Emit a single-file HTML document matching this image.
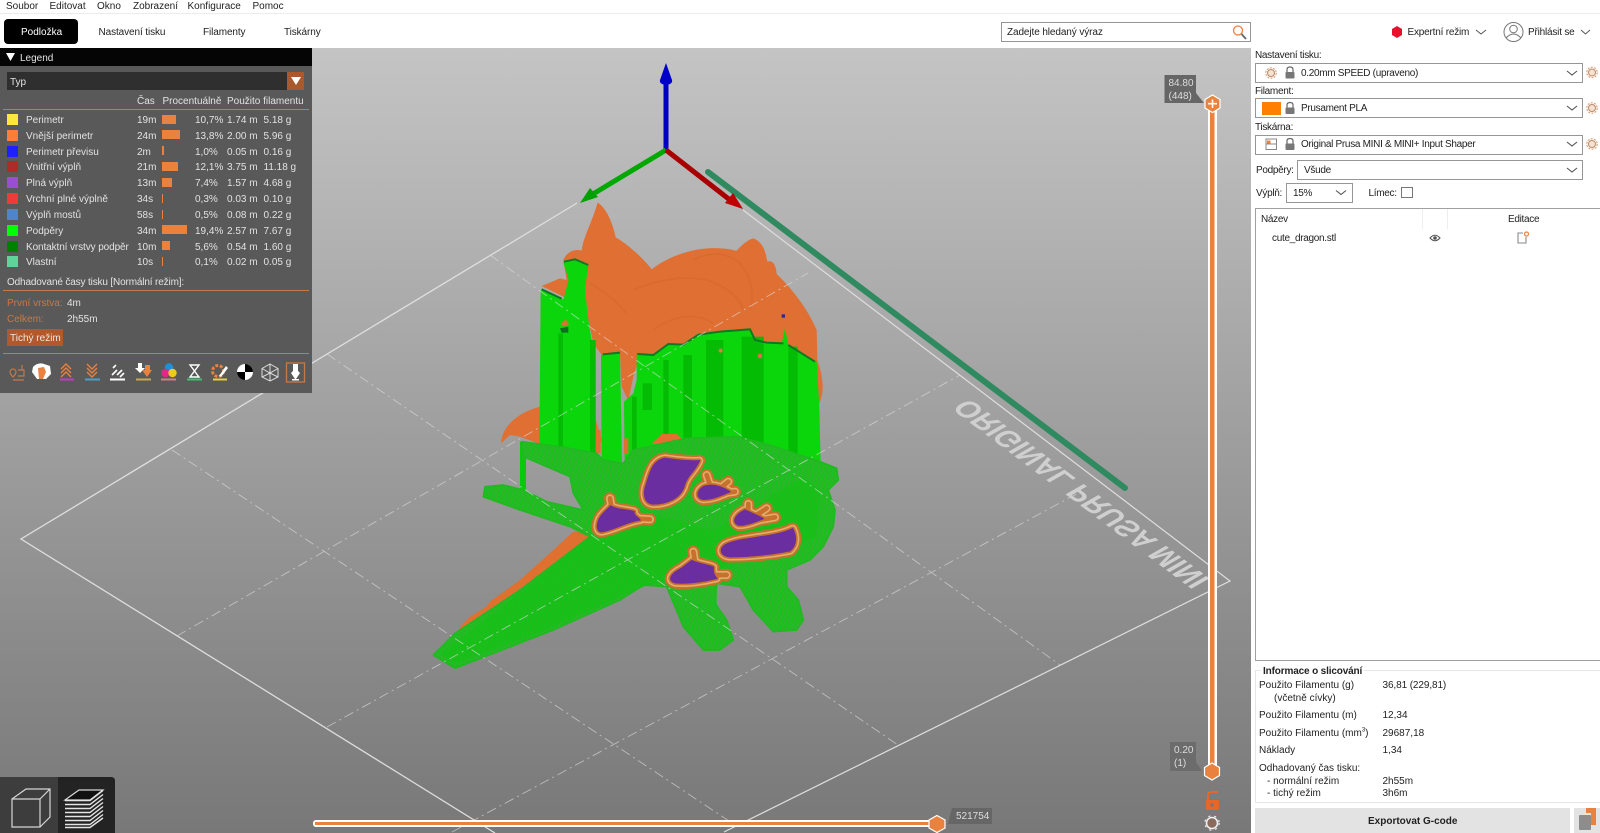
<!DOCTYPE html>
<html><head><meta charset="utf-8"><title>PrusaSlicer</title>
<style>
html,body{margin:0;padding:0;background:#fff;overflow:hidden}
body{width:1600px;height:833px;position:relative;font-family:"Liberation Sans",sans-serif;font-size:10px;color:#222}
.t{position:absolute;white-space:nowrap;line-height:12px;margin-top:1.5px}
.c{letter-spacing:-.3px}
.b{position:absolute;box-sizing:border-box;border:1px solid #969696;background:#fff}
.l{color:#e2e2e2}
.o{color:#c47a49}
.sw{position:absolute;left:7px;width:11px;height:11px}
.bar{position:absolute;left:162px;height:9px;background:#e9813f}
svg{position:absolute;left:0;top:0}
</style></head><body>

<!-- 3D canvas -->
<div style="position:absolute;left:0;top:48px;width:1251px;height:785px;background:linear-gradient(#c4c4c4,#787878)"></div>
<svg width="1251" height="833" viewBox="0 0 1251 833">
<defs>
<pattern id="h" width="5" height="5" patternUnits="userSpaceOnUse" patternTransform="rotate(-20)"><rect width="5" height="5" fill="#10c010"/><rect width="5" height="1.7" fill="#4ab04a"/></pattern>
<g id="p">
<path d="M735 85C770 90 810 95 838 92C825 125 800 135 792 170C780 205 740 222 700 222C672 220 668 190 680 160C690 125 700 90 735 85Z"/>
<path d="M572 228C590 240 620 238 642 245C640 258 655 262 660 270C620 275 580 300 545 305C525 305 530 270 550 250Z"/>
<path d="M850 170C875 160 905 170 930 185C905 195 880 208 850 208C830 205 828 185 850 170Z"/>
<path d="M975 240C995 250 1020 260 1030 266C1005 275 975 288 955 285C935 275 945 255 975 240Z"/>
<path d="M915 345C960 320 1060 325 1118 296C1130 320 1130 345 1110 362C1060 372 990 380 930 380C905 378 895 360 915 345Z"/>
<path d="M815 392C845 405 870 405 880 412C878 425 880 435 890 445C850 455 800 462 765 458C740 450 755 430 785 415Z"/>
</g>
<g id="blobs">
<use href="#p"/>
<path d="M860 135L870 165M925 155L900 175M945 185L910 190M985 222L985 250M1040 235L1010 255M1065 262L1020 270M570 205L575 235M690 268L640 265M820 365L825 395M920 435L875 435" fill="none"/>
</g>
</defs>
<!-- bed outline -->
<g fill="none" stroke="#dedede">
<path d="M577 203L21 539L495 833" stroke-width="1.3"/>
<path d="M743 210L1230 581L724 832" stroke-width="1.2"/>
</g>
<!-- bar -->
<path d="M708 172L1125 488" stroke="#2f8a60" stroke-width="6" stroke-linecap="round"/>
<!-- axes -->
<path d="M666 150V84" stroke="#0000c0" stroke-width="5"/>
<path d="M666 63L672 80Q673 84 666 85Q659 84 660 80Z" fill="#0000c8"/>
<path d="M666 150L593 194" stroke="#00a800" stroke-width="5"/>
<path d="M580 203L590 188L598 197Z" fill="#00a000"/>
<path d="M666 150L730 200" stroke="#a80000" stroke-width="5"/>
<path d="M743 209L725 203L733 193Z" fill="#c00000"/>

<!-- upper model -->
<g transform="translate(420,180) scale(.33333)">
<path fill="#df6f32" d="M243 790C245 745 285 700 360 680L400 800L380 800L300 770L270 765Z"/>
<path fill="#df6f32" d="M522 700L545 780L530 820Z"/>
<path fill="#df6f32" d="M533 68C560 85 578 130 587 172C620 190 670 235 695 268C750 225 830 200 900 205C925 205 945 212 950 212C965 195 985 178 1000 175C1025 185 1035 205 1042 245C1055 240 1068 250 1070 282C1110 320 1160 380 1190 450L1192 540C1210 590 1215 640 1195 675L1150 600L900 540L660 525L640 590L625 662L605 620L600 520L545 525L520 490L505 420L495 330L440 355L365 318L420 295L440 300L430 240C440 215 465 205 485 212C490 170 515 130 533 68Z"/>
<path fill="none" stroke="#c85f28" stroke-width="5" opacity=".25" d="M820 240Q900 200 960 250Q1010 310 990 390M640 330Q760 280 860 300Q950 330 970 390M510 310Q580 350 620 400M700 450Q800 380 880 430"/>
<!-- pillars -->
<path fill="#0bd60b" d="M362 330L430 358L446 300L430 248L465 240L505 252L495 330L505 420L515 480L527 540L527 820L358 820Z"/>
<path fill="#0bd60b" d="M543 525L600 518L606 850L545 850Z"/>
<path fill="#0bd60b" d="M650 518L700 525L745 495L790 495L835 462L990 448L1005 480L1040 490L1085 490L1095 445L1105 495L1150 525L1190 545L1198 680L1202 850L614 850L612 665L640 640L650 600Z"/>
<g fill="#04bc04">
<rect x="415" y="460" width="14" height="360"/><rect x="510" y="480" width="17" height="340"/>
<rect x="668" y="610" width="28" height="80"/><rect x="730" y="540" width="16" height="300"/>
<rect x="790" y="525" width="26" height="320"/><rect x="858" y="480" width="52" height="360"/>
<rect x="965" y="470" width="66" height="370"/><rect x="1105" y="500" width="28" height="340"/>
<rect x="636" y="650" width="14" height="190"/>
</g>
<path fill="none" stroke="#0c7a22" stroke-width="6" d="M365 328L425 356M432 245L465 238L505 255M548 523L600 518M652 522L700 525L745 492L790 494L835 464L900 455L990 448L1005 480L1040 488L1090 490M1105 495L1185 545"/>
<path fill="#df6f32" d="M422 432L437 418L447 432L432 440Z"/>
<path fill="#0c6e20" d="M420 445L445 440V458L425 458Z"/>
<circle cx="1020" cy="528" r="7" fill="#e06a4a"/><circle cx="902" cy="512" r="6" fill="#d8804a"/>
<path fill="#2a2a90" d="M1085 403h10v10h-10z"/>
</g>

<!-- lower model -->
<g transform="translate(420,430) scale(.33333)">
<path fill="#0bc80b" d="M300 35H318V180H300Z"/>
<path fill="#0bd60b" d="M850 440H890V530H850ZM960 390L1100 390V480L1020 480Z"/>
<path fill="#e06f30" d="M695 40L725 12L770 12L790 30L740 50Z"/>
<path fill="#e06f30" d="M612 25L625 25V72L612 72ZM528 0H542V70H528Z"/>
<path fill="#e0702f" d="M510 305L460 305L400 360L300 450L210 515L200 530L150 560L130 580L105 612L205 555L300 475L515 350Z"/>
<path fill="url(#h)" stroke="#22b822" stroke-width="5" stroke-linejoin="round" d="M305 35L420 50L530 70L550 90L610 100L640 60L800 25L950 20L1050 45L1200 95L1250 115L1255 150L1225 180L1245 240L1240 290L1210 350L1170 390L1100 420L1100 470L1135 510L1150 570L1130 600L1060 605L1000 540L960 470L890 460L885 520L920 570L940 630L900 660L850 660L790 590L740 470L670 465L600 510L400 600L105 715L40 675L105 610L300 480L510 320L450 290L300 240L190 200L195 170L250 165L310 180L380 215L490 240L460 190L450 140L310 80Z"/>
<path fill="#0dc60d" opacity=".4" d="M510 320L640 240L880 300L1150 140L1200 180L1190 320L1000 390L700 460L600 500L400 590L110 700L60 672L300 490Z"/>
<g stroke-linejoin="round" stroke-linecap="round" fill="#c8702c">
<use href="#blobs" stroke="#c8702c" stroke-width="36"/>
<use href="#blobs" stroke="#dfae68" stroke-width="24"/>
<use href="#blobs" stroke="#c8702c" stroke-width="14"/>
</g>
<use href="#p" fill="#6a2ea0" stroke="#6a2ea0" stroke-width="4" stroke-linejoin="round"/>
</g>

<!-- dashed grid -->
<g fill="none" stroke="#dcdcdc" stroke-width=".9" stroke-dasharray="10 4 2 4" opacity=".65">
<path d="M172 450L738 827"/><path d="M327 354L898 745"/><path d="M490 255L1060 665"/>
<path d="M177 636L808 273"/><path d="M327 727L960 375"/><path d="M452 832L1080 492"/>
</g>
<!-- bed label (flipped, seen from below) -->
<text transform="matrix(.80 .60 .96 -.55 969 398)" font-family="Liberation Sans" font-weight="bold" font-size="27.5" fill="#cfcfcf">ORIGINAL PRUSA MINI</text>

<!-- bottom-left view switch -->
<path d="M0 777H58V833H0Z" fill="#3d3d3d"/>
<path d="M58 777H111Q115 777 115 781V833H58Z" fill="#232323"/>
<g fill="none" stroke="#d6d6d6" stroke-width="1.2">
<path d="M12 799H40V827H12ZM12 799L26 789H50V817L40 827M40 799L50 789"/>
<path d="M65 800L79 790H103L90 800Z" fill="#111"/>
</g>
<g fill="none" stroke="#e4e4e4" stroke-width="1.4">
<path d="M65 800.5H90L103 790.5M65 804.5H90L103 794.5M65 808.5H90L103 798.5M65 812.5H90L103 802.5M65 816.5H90L103 806.5M65 820.5H90L103 810.5M65 824.5H90L103 814.5M65 827.5H90L103 818"/>
</g>

<!-- horizontal slider -->
<rect x="313" y="820" width="624" height="7" rx="3" fill="#fff"/>
<rect x="315" y="822" width="622" height="3" fill="#e9813f"/>
<path d="M937 815.5L945 820V828L937 832.5L929 828V820Z" fill="#e9813f" stroke="#fff" stroke-width="1.2"/>
<path d="M952 808H992V824H952L948 824Z" fill="#666"/>
<!-- vertical slider -->
<rect x="1208" y="110" width="9" height="660" fill="#fff"/>
<rect x="1210" y="110" width="4.5" height="660" fill="#e9813f"/>
<path d="M1212.5 95L1220 99.5V108L1212.5 112.5L1205 108V99.5Z" fill="#e9813f" stroke="#fff" stroke-width="1.2"/>
<path d="M1208 103.7H1217M1212.5 99.5V108" stroke="#fff" stroke-width="1.6"/>
<path d="M1212 763L1219.5 767.5V775.5L1212 780L1204.5 775.5V767.5Z" fill="#e9813f" stroke="#fff" stroke-width="1.2"/>
<path d="M1164.5 75H1196V93L1204 103H1164.5Z" fill="#666"/>
<path d="M1170 742H1196V762L1202 771H1170Z" fill="#6c6c6c"/>
<rect x="1206" y="800" width="13" height="10" rx="1" fill="#e8662a"/>
<path d="M1208 800V795Q1208 792 1212 792H1218" fill="none" stroke="#e8662a" stroke-width="2"/>
<circle cx="1212" cy="805" r="1.7" fill="#777"/>
<circle cx="1212" cy="823" r="5.5" fill="#8a6a5c" stroke="#eee" stroke-width="1.6"/>
<circle cx="1212" cy="823" r="7.2" fill="none" stroke="#eee" stroke-width="1.2" stroke-dasharray="2 4"/>
</svg>
<div class="t" style="left:1168.5px;top:76.5px;color:#ddd">84.80</div>
<div class="t" style="left:1168.5px;top:89px;color:#ddd">(448)</div>
<div class="t" style="left:1174px;top:743.5px;color:#ddd">0.20</div>
<div class="t" style="left:1174px;top:756px;color:#ddd">(1)</div>
<div class="t" style="left:956px;top:809px;color:#ddd;font-size:10px">521754</div>

<!-- top bar -->
<div style="position:absolute;left:0;top:0;width:1600px;height:48px;background:#fff"></div>
<div style="position:absolute;left:0;top:13px;width:1600px;height:1px;background:#ececec"></div>
<div class="t" style="left:6px;top:-1px">Soubor</div>
<div class="t" style="left:49.5px;top:-1px">Editovat</div>
<div class="t" style="left:97px;top:-1px">Okno</div>
<div class="t" style="left:133px;top:-1px">Zobrazení</div>
<div class="t" style="left:187.5px;top:-1px">Konfigurace</div>
<div class="t" style="left:252.5px;top:-1px">Pomoc</div>
<div style="position:absolute;left:4px;top:19px;width:73.5px;height:25px;background:#000;border-radius:4px"></div>
<div class="t" style="left:21px;top:25.5px;color:#fff">Podložka</div>
<div class="t" style="left:98.5px;top:25.5px;letter-spacing:-.1px">Nastavení tisku</div>
<div class="t" style="left:203px;top:25.5px;letter-spacing:-.1px">Filamenty</div>
<div class="t" style="left:284px;top:25.5px;letter-spacing:-.1px">Tiskárny</div>
<div class="b" style="left:1001px;top:22px;width:250px;height:20px"></div>
<div class="t" style="left:1007px;top:25.5px;letter-spacing:-.1px">Zadejte hledaný výraz</div>

<!-- legend panel -->
<div style="position:absolute;left:0;top:48px;width:312px;height:345px;background:#595959"></div>
<div style="position:absolute;left:0;top:48px;width:312px;height:18px;background:#050505"></div>
<div class="t l" style="left:20px;top:51.5px">Legend</div>
<div style="position:absolute;left:7px;top:72px;width:280px;height:18px;background:#2f2f2f"></div>
<div style="position:absolute;left:287px;top:72px;width:17px;height:18px;background:#a95a2c"></div>
<div class="t l" style="left:10px;top:75px">Typ</div>
<div class="t l" style="left:137px;top:94px">Čas</div>
<div class="t l" style="left:162.5px;top:94px">Procentuálně</div>
<div class="t l" style="left:227px;top:94px">Použito filamentu</div>
<div style="position:absolute;left:3px;top:109px;width:306px;height:1px;background:#c47a49"></div>

<div class="sw" style="top:114px;background:#ffe63c"></div><div class="t l" style="left:26px;top:113px">Perimetr</div><div class="t l" style="left:137px;top:113px">19m</div><div class="bar" style="top:114.5px;width:14px"></div><div class="t l" style="left:195px;top:113px">10,7%</div><div class="t l" style="left:227px;top:113px">1.74 m</div><div class="t l" style="left:263.5px;top:113px">5.18 g</div>
<div class="sw" style="top:130px;background:#ff7d38"></div><div class="t l" style="left:26px;top:129px">Vnější perimetr</div><div class="t l" style="left:137px;top:129px">24m</div><div class="bar" style="top:130px;width:18px"></div><div class="t l" style="left:195px;top:129px">13,8%</div><div class="t l" style="left:227px;top:129px">2.00 m</div><div class="t l" style="left:263.5px;top:129px">5.96 g</div>
<div class="sw" style="top:146px;background:#1f1fff"></div><div class="t l" style="left:26px;top:145px">Perimetr převisu</div><div class="t l" style="left:137px;top:145px">2m</div><div class="bar" style="top:146px;width:1.5px"></div><div class="t l" style="left:195px;top:145px">1,0%</div><div class="t l" style="left:227px;top:145px">0.05 m</div><div class="t l" style="left:263.5px;top:145px">0.16 g</div>
<div class="sw" style="top:161px;background:#b02a2a"></div><div class="t l" style="left:26px;top:160.7px">Vnitřní výplň</div><div class="t l" style="left:137px;top:160.7px">21m</div><div class="bar" style="top:162px;width:16px"></div><div class="t l" style="left:195px;top:160.7px">12,1%</div><div class="t l" style="left:227px;top:160.7px">3.75 m</div><div class="t l" style="left:263.5px;top:160.7px">11.18 g</div>
<div class="sw" style="top:177px;background:#9a4fd0"></div><div class="t l" style="left:26px;top:176.7px">Plná výplň</div><div class="t l" style="left:137px;top:176.7px">13m</div><div class="bar" style="top:178px;width:10px"></div><div class="t l" style="left:195px;top:176.7px">7,4%</div><div class="t l" style="left:227px;top:176.7px">1.57 m</div><div class="t l" style="left:263.5px;top:176.7px">4.68 g</div>
<div class="sw" style="top:193px;background:#f03a3a"></div><div class="t l" style="left:26px;top:192.5px">Vrchní plné výplně</div><div class="t l" style="left:137px;top:192.5px">34s</div><div class="bar" style="top:194px;width:1px"></div><div class="t l" style="left:195px;top:192.5px">0,3%</div><div class="t l" style="left:227px;top:192.5px">0.03 m</div><div class="t l" style="left:263.5px;top:192.5px">0.10 g</div>
<div class="sw" style="top:209px;background:#4f85c8"></div><div class="t l" style="left:26px;top:208.3px">Výplň mostů</div><div class="t l" style="left:137px;top:208.3px">58s</div><div class="bar" style="top:210px;width:1px"></div><div class="t l" style="left:195px;top:208.3px">0,5%</div><div class="t l" style="left:227px;top:208.3px">0.08 m</div><div class="t l" style="left:263.5px;top:208.3px">0.22 g</div>
<div class="sw" style="top:225px;background:#00ff00"></div><div class="t l" style="left:26px;top:224px">Podpěry</div><div class="t l" style="left:137px;top:224px">34m</div><div class="bar" style="top:225px;width:25px"></div><div class="t l" style="left:195px;top:224px">19,4%</div><div class="t l" style="left:227px;top:224px">2.57 m</div><div class="t l" style="left:263.5px;top:224px">7.67 g</div>
<div class="sw" style="top:241px;background:#008000"></div><div class="t l" style="left:26px;top:240px;letter-spacing:-.1px">Kontaktní vrstvy podpěr</div><div class="t l" style="left:137px;top:240px">10m</div><div class="bar" style="top:241px;width:7.5px"></div><div class="t l" style="left:195px;top:240px">5,6%</div><div class="t l" style="left:227px;top:240px">0.54 m</div><div class="t l" style="left:263.5px;top:240px">1.60 g</div>
<div class="sw" style="top:256px;background:#5ed39a"></div><div class="t l" style="left:26px;top:255.7px">Vlastní</div><div class="t l" style="left:137px;top:255.7px">10s</div><div class="bar" style="top:257px;width:1px"></div><div class="t l" style="left:195px;top:255.7px">0,1%</div><div class="t l" style="left:227px;top:255.7px">0.02 m</div><div class="t l" style="left:263.5px;top:255.7px">0.05 g</div>

<div class="t l" style="left:7px;top:275px;letter-spacing:-.15px">Odhadované časy tisku [Normální režim]:</div>
<div style="position:absolute;left:3px;top:290px;width:306px;height:1px;background:#c47a49"></div>
<div class="t o" style="left:7px;top:296px">První vrstva:</div><div class="t l" style="left:67px;top:296px">4m</div>
<div class="t o" style="left:7px;top:312px">Celkem:</div><div class="t l" style="left:67px;top:312px">2h55m</div>
<div style="position:absolute;left:7px;top:329px;width:56px;height:17px;background:#b0592c"></div>
<div class="t" style="left:10px;top:331px;color:#f0e6e0">Tichý režim</div>
<div style="position:absolute;left:3px;top:352.5px;width:306px;height:1.5px;background:#c47a49"></div>

<svg width="312" height="393" viewBox="0 0 312 393" style="left:0;top:0">
<path d="M6 53H15L10.5 61Z" fill="#fff"/>
<path d="M291 77H301L296 85Z" fill="#fff"/>
<!-- icon row -->
<g fill="none" stroke="#c47a49" stroke-width="1.2">
<path d="M10 372a3 3 0 1 1 6 0q0 2-3 5q-3-3-3-5ZM13 380H24M18 370H24V376H18M22 365V370"/>
</g>
<path d="M33 367Q38 362 44 364L50 366L51 374L46 379H37L32 372Z" fill="#fff"/>
<path d="M38 368L44 367L46 372L43 379H39Z" fill="#e9813f"/>
<g fill="none" stroke="#e9813f" stroke-width="1.4">
<path d="M61 369L66 364L71 369M61 373L66 368L71 373M61 377L66 372L71 377"/>
<path d="M87 364L92 369L97 364M87 368L92 373L97 368M87 372L92 377L97 372"/>
</g>
<rect x="60" y="378.5" width="14" height="2" fill="#c13ac4"/>
<rect x="85" y="378.5" width="15" height="2" fill="#4aa0c8"/>
<g fill="none" stroke="#fff" stroke-width="1.6"><path d="M112 375L117 370M117 375L122 370M113 368L116 365M120 377L124 373" /></g>
<rect x="110" y="378.5" width="15" height="2" fill="#fff"/>
<path d="M138 363H142V368H145L140 373L135 368H138Z" fill="#fff"/>
<path d="M145 365H150V370H152L147 377L142 370H145Z" fill="#e9813f"/>
<rect x="136" y="378.5" width="15" height="2" fill="#c8a850"/>
<circle cx="169" cy="367.5" r="4.2" fill="#1e90d8"/><circle cx="165.5" cy="373" r="4.2" fill="#e0288a"/><circle cx="172.5" cy="373" r="4.2" fill="#f0c820"/>
<rect x="161" y="378.5" width="15" height="2" fill="#d08080"/>
<path d="M190 365H199L194.5 371L199 377H190L194.5 371Z" fill="none" stroke="#fff" stroke-width="1.4"/>
<rect x="187" y="378.5" width="15" height="2" fill="#40c070"/>
<circle cx="218" cy="371" r="5.5" fill="none" stroke="#e9813f" stroke-width="3" stroke-dasharray="3 1.6"/>
<path d="M219 376L226 366L228 368L221 377Z" fill="#fff"/>
<rect x="213" y="378.5" width="14" height="2" fill="#e8d040"/>
<circle cx="245" cy="372" r="8" fill="#fff"/><path d="M245 364A8 8 0 0 1 253 372H245ZM245 372V380A8 8 0 0 1 237 372Z" fill="#000"/>
<g fill="none" stroke="#ddd" stroke-width="1"><path d="M270 364L278 368.5V377L270 381L262 377V368.5ZM262 368.5L270 373L278 368.5M270 373V381M270 364V373M262 377L270 373L278 377"/></g>
<rect x="286.5" y="363" width="18" height="19" fill="none" stroke="#c47a49" stroke-width="1.3"/>
<path d="M293 364H298V371L300 373L296 379H295L291 373L293 371Z" fill="#fff"/><rect x="292" y="379" width="7" height="1.5" fill="#fff"/>
</svg>

<!-- right panel -->
<div style="position:absolute;left:1251px;top:48px;width:349px;height:785px;background:#fff"></div>
<div class="t c" style="left:1255px;top:48.5px">Nastavení tisku:</div>
<div class="b" style="left:1255px;top:63px;width:328px;height:20px"></div>
<div class="t c" style="left:1301px;top:66px">0.20mm SPEED (upraveno)</div>
<div class="t c" style="left:1255px;top:84px">Filament:</div>
<div class="b" style="left:1255px;top:98px;width:328px;height:20px"></div>
<div style="position:absolute;left:1262px;top:102px;width:19px;height:12.5px;background:#ff8000"></div>
<div class="t c" style="left:1301px;top:101.5px">Prusament PLA</div>
<div class="t c" style="left:1255px;top:120.5px">Tiskárna:</div>
<div class="b" style="left:1255px;top:134.5px;width:328px;height:20px"></div>
<div class="t c" style="left:1301px;top:137.5px">Original Prusa MINI &amp; MINI+ Input Shaper</div>
<div class="t c" style="left:1256px;top:163.5px">Podpěry:</div>
<div class="b" style="left:1297px;top:160px;width:286px;height:20px"></div>
<div class="t c" style="left:1304px;top:163.5px">Všude</div>
<div class="t c" style="left:1256px;top:186px">Výplň:</div>
<div class="b" style="left:1285.5px;top:182.5px;width:67px;height:20px"></div>
<div class="t c" style="left:1293px;top:186px">15%</div>
<div class="t c" style="left:1368.5px;top:186px">Límec:</div>
<div class="b" style="left:1401px;top:187px;width:12px;height:11px;border-color:#777"></div>
<div class="b" style="left:1255px;top:208px;width:345px;height:452.5px;border-color:#a0a0a0;border-right:0;border-width:1px"></div>
<div style="position:absolute;left:1422px;top:209px;width:1px;height:20px;background:#eee"></div>
<div style="position:absolute;left:1447px;top:209px;width:1px;height:20px;background:#eee"></div>
<div class="t c" style="left:1261px;top:212px">Název</div>
<div class="t c" style="left:1508px;top:212px">Editace</div>
<div class="t c" style="left:1272px;top:231.5px">cute_dragon.stl</div>

<div class="t" style="left:1407.5px;top:25.5px;letter-spacing:-.2px">Expertní režim</div>
<div class="t" style="left:1528px;top:25.5px;letter-spacing:-.2px">Přihlásit se</div>

<div style="position:absolute;left:1255px;top:670px;width:345px;height:133px;box-sizing:border-box;border:1px solid #e6e6e6;border-right:0"></div>
<div class="t" style="left:1261px;top:664px;font-weight:bold;background:#fff;padding:0 2px;letter-spacing:-.15px">Informace o slicování</div>
<div class="t" style="left:1259px;top:678.5px">Použito Filamentu (g)</div><div class="t" style="left:1382.5px;top:678.5px;letter-spacing:-.1px">36,81 (229,81)</div>
<div class="t" style="left:1274px;top:691.5px">(včetně cívky)</div>
<div class="t" style="left:1259px;top:708.5px">Použito Filamentu (m)</div><div class="t" style="left:1382.5px;top:708.5px">12,34</div>
<div class="t" style="left:1259px;top:726.5px">Použito Filamentu (mm<sup style="font-size:6px;line-height:0">3</sup>)</div><div class="t" style="left:1382.5px;top:726.5px">29687,18</div>
<div class="t" style="left:1259px;top:743.5px">Náklady</div><div class="t" style="left:1382.5px;top:743.5px">1,34</div>
<div class="t" style="left:1259px;top:761.5px">Odhadovaný čas tisku:</div>
<div class="t" style="left:1267px;top:774px">- normální režim</div><div class="t" style="left:1382.5px;top:774px">2h55m</div>
<div class="t" style="left:1267px;top:786.5px">- tichý režim</div><div class="t" style="left:1382.5px;top:786.5px">3h6m</div>
<div style="position:absolute;left:1255px;top:808px;width:315px;height:25px;background:#e3e3e3"></div>
<div class="t" style="left:1368px;top:814px;font-weight:bold">Exportovat G-code</div>
<div style="position:absolute;left:1574px;top:808px;width:26px;height:25px;background:#e3e3e3"></div>

<svg width="1600" height="833" viewBox="0 0 1600 833">
<!-- search icon -->
<circle cx="1238" cy="30.5" r="4.5" fill="none" stroke="#e9813f" stroke-width="1.3"/>
<path d="M1241.5 34L1246 39" stroke="#666" stroke-width="1.8"/>
<!-- expert -->
<path d="M1397 26L1402 29V35L1397 38L1392 35V29Z" fill="#e8102c"/>
<path d="M1476 30L1481 34L1486 30M1581 30L1585.5 34L1590 30" fill="none" stroke="#555" stroke-width="1"/>
<circle cx="1513.5" cy="32" r="9.5" fill="none" stroke="#777"/>
<circle cx="1513.5" cy="29" r="3.8" fill="none" stroke="#777"/>
<path d="M1506 38Q1513.5 30 1521 38" fill="none" stroke="#777"/>
<!-- combo chevrons -->
<path d="M1567 71L1572 75L1577 71M1567 106L1572 110L1577 106M1567 142L1572 146L1577 142M1567 168L1572 172L1577 168M1336 190.5L1341 194.5L1346 190.5" fill="none" stroke="#555" stroke-width="1.1"/>
<!-- gears -->
<g fill="#f6e2d0" stroke="#b88a6a">
<circle cx="1271" cy="73" r="3.5" stroke-width="1"/><circle cx="1592" cy="72.5" r="3.5" stroke-width="1"/><circle cx="1592" cy="108" r="3.5" stroke-width="1"/><circle cx="1592" cy="144" r="3.5" stroke-width="1"/>
</g>
<g fill="none" stroke="#dca67c" stroke-width="1.2" stroke-dasharray="2 1.3">
<circle cx="1271" cy="73" r="5.2"/><circle cx="1592" cy="72.5" r="5.2"/><circle cx="1592" cy="108" r="5.2"/><circle cx="1592" cy="144" r="5.2"/>
</g>
<!-- locks -->
<g fill="#777"><rect x="1285.5" y="72" width="9" height="6.5" rx="1"/><rect x="1285.5" y="107.5" width="9" height="6.5" rx="1"/><rect x="1285.5" y="143.5" width="9" height="6.5" rx="1"/></g>
<g fill="none" stroke="#666" stroke-width="1.2"><path d="M1287 72V69.5Q1287 67 1290 67Q1293 67 1293 69.5V72M1287 107.5V105Q1287 102.5 1290 102.5Q1293 102.5 1293 105V107.5M1287 143.5V141Q1287 138.5 1290 138.5Q1293 138.5 1293 141V143.5"/></g>
<!-- printer icon -->
<rect x="1266" y="139" width="10.5" height="10.5" fill="#fff" stroke="#888"/>
<rect x="1267" y="140.5" width="3.5" height="3" fill="#e9813f"/><path d="M1266 144H1276" stroke="#888"/>
<!-- eye -->
<path d="M1430 238Q1435 232.5 1440 238Q1435 243.5 1430 238Z" fill="none" stroke="#555" stroke-width="1.1"/><circle cx="1435" cy="238" r="1.8" fill="#555"/>
<!-- edit -->
<path d="M1523 233H1518V243H1526V237" fill="none" stroke="#888" stroke-width="1.1"/><circle cx="1526.5" cy="234" r="2" fill="none" stroke="#e9813f" stroke-width="1.2"/>
<!-- export sd -->
<rect x="1579" y="815" width="12" height="15" rx="1" fill="#8d8d8d"/>
<path d="M1586 808H1596V825H1591V813H1586Z" fill="#e9813f"/>
</svg>
</body></html>
